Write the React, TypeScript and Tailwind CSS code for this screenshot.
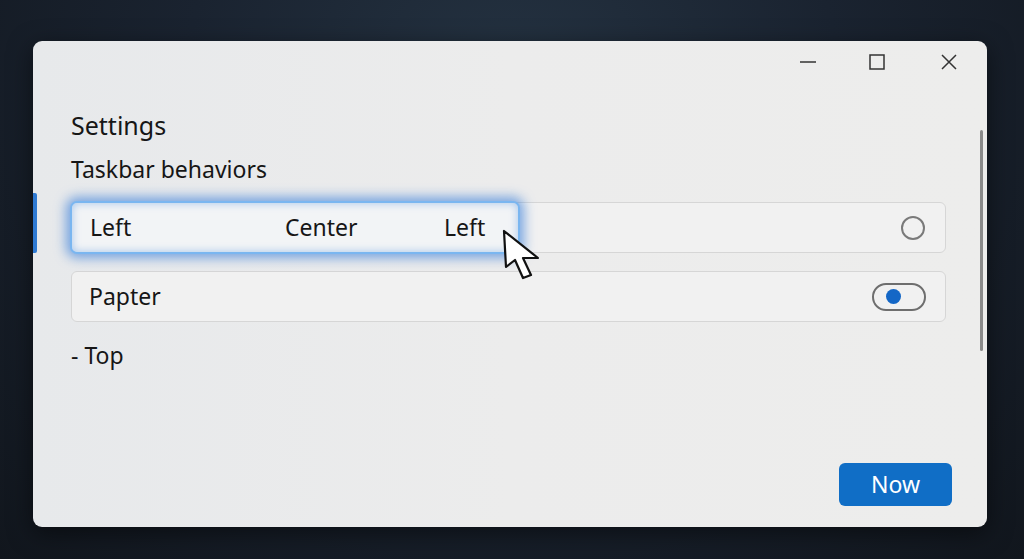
import React from "react";

function Cursor() {
  return (
    <svg
      className="absolute left-[429px] top-[25px]"
      width="44"
      height="56"
      viewBox="-3 -3 44 56"
    >
      <path
        d="M0 0 L2 36 L11 29 L19 47 L27 44 L19 27 L34 27 Z"
        fill="#ffffff"
        stroke="#111111"
        strokeWidth="2.2"
        strokeLinejoin="round"
      />
    </svg>
  );
}

export default function App() {
  return (
    <div
      className="w-[1024px] h-[559px] overflow-hidden bg-[radial-gradient(ellipse_at_50%_15%,#243241_0%,#1a2330_45%,#11161d_100%)] pt-[41px] pl-[33px]"
      style={{ fontFamily: '"Noto Sans", "Open Sans", sans-serif' }}
    >
      <div className="relative w-[954px] h-[486px] rounded-[9px] bg-[linear-gradient(90deg,#e7e9eb_0%,#ececec_50%,#ededec_100%)] shadow-[0_6px_24px_rgba(0,0,0,0.5)] flex flex-col">
        {/* left accent */}
        <div className="absolute left-0 top-[152px] w-[4px] h-[60px] rounded-r-[2px] bg-[#2f7ad3]" />
        {/* scrollbar */}
        <div className="absolute left-[947px] top-[89px] w-[3px] h-[221px] rounded-full bg-[#8a8a8a]" />

        {/* title bar */}
        <div className="h-[42px] flex items-center justify-end pr-[30px] text-[#2b2b2b]">
          <svg width="16" height="16" viewBox="0 0 16 16" className="mr-[53px]">
            <line x1="0" y1="8" x2="16" y2="8" stroke="#333" strokeWidth="1.5" />
          </svg>
          <svg width="16" height="16" viewBox="0 0 16 16" className="mr-[56px]">
            <rect x="1" y="1" width="14" height="14" fill="none" stroke="#333" strokeWidth="1.5" />
          </svg>
          <svg width="16" height="16" viewBox="0 0 16 16">
            <path d="M1 1 L15 15 M15 1 L1 15" stroke="#333" strokeWidth="1.5" />
          </svg>
        </div>

        <div className="pl-[38px] pr-[41px] flex flex-col">
          <div className="mt-[26px] text-[25px] leading-[32px] text-[#161616]">Settings</div>
          <div className="mt-[12px] text-[23px] leading-[32px] text-[#161616]">Taskbar behaviors</div>

          {/* row 1 */}
          <div className="relative mt-[17px] h-[51px] rounded-[6px] border border-[#d6d6d6] bg-[#f1f1f1] flex items-center justify-end pr-[20px]">
            <div className="w-[24px] h-[24px] rounded-full border-[2px] border-[#7a7a7a]" />
            <div className="absolute -left-[2px] -top-[2px] w-[450px] h-[53px] rounded-[7px] border-[2px] border-[#7ab6f0] bg-[#f2f4f6] shadow-[0_0_12px_4px_rgba(40,115,215,0.6),inset_0_0_8px_rgba(47,125,220,0.4)] flex items-center pl-[18px] text-[23px] text-[#161616]">
              <span className="w-[195px]">Left</span>
              <span className="w-[159px]">Center</span>
              <span>Left</span>
            </div>
            <Cursor />
          </div>

          {/* row 2 */}
          <div className="mt-[18px] h-[51px] rounded-[6px] border border-[#d6d6d6] bg-[#f1f1f1] flex items-center justify-between pl-[17px] pr-[19px]">
            <span className="text-[23px] text-[#161616]">Papter</span>
            <div className="w-[54px] h-[28px] rounded-full border-[2px] border-[#6e6e6e] flex items-center pl-[12px]">
              <div className="w-[15px] h-[15px] rounded-full bg-[#1467c6]" />
            </div>
          </div>

          <div className="mt-[17px] text-[23px] leading-[32px] text-[#161616]">- Top</div>
        </div>

        <div className="mt-auto flex justify-end pr-[35px] pb-[21px]">
          <div className="w-[113px] h-[43px] rounded-[6px] bg-[#106ec6] flex items-center justify-center text-[23px] text-white">
            Now
          </div>
        </div>
      </div>
    </div>
  );
}
